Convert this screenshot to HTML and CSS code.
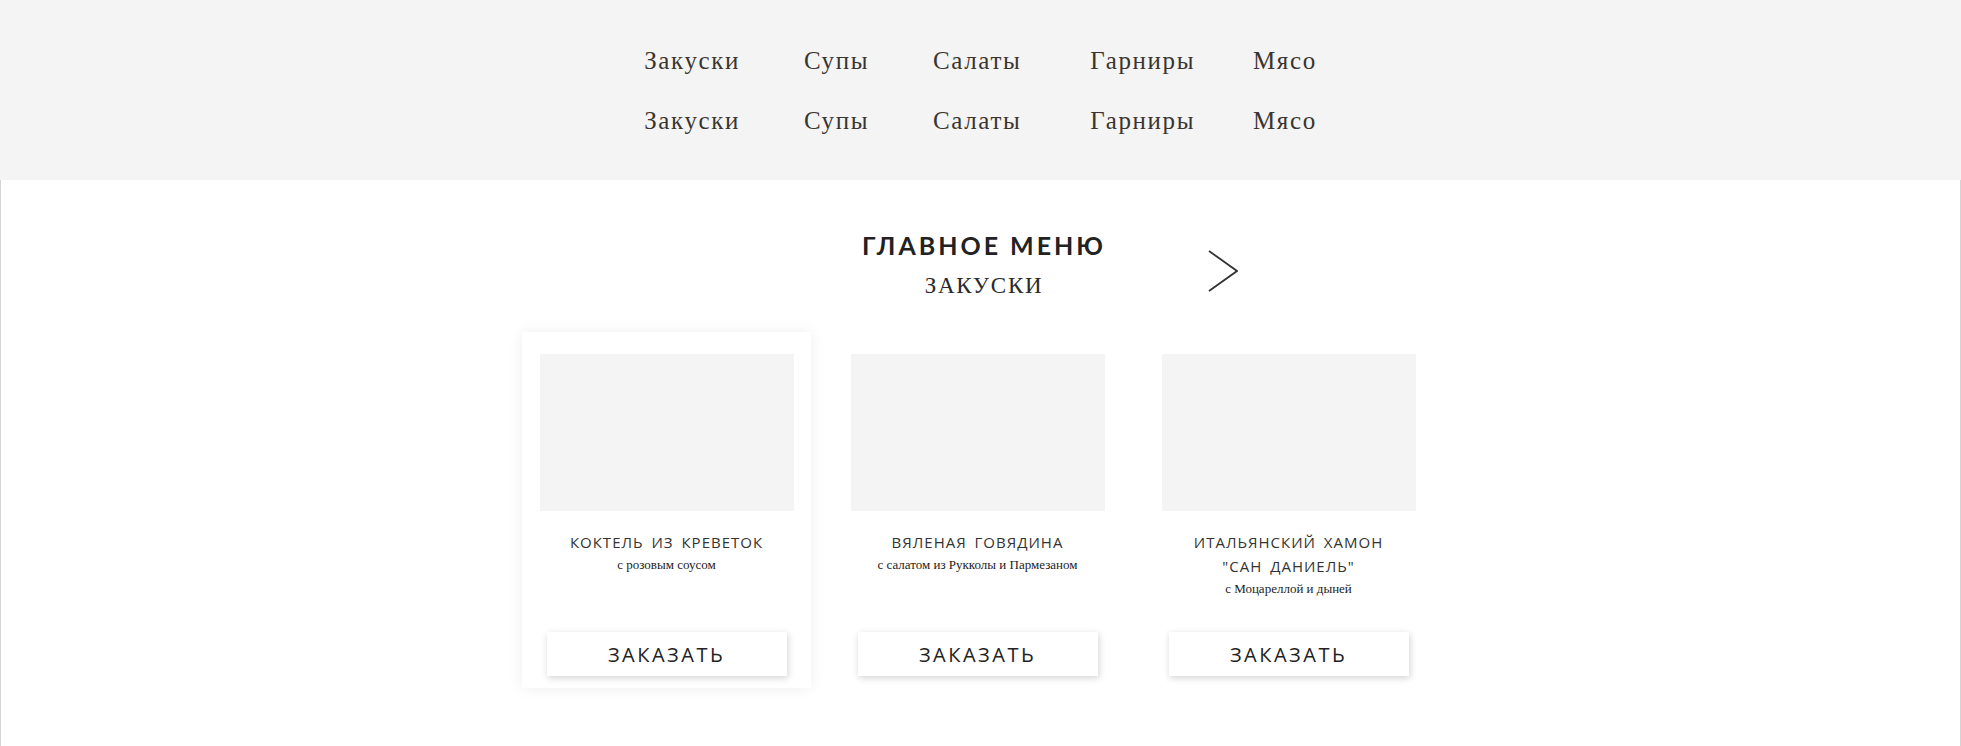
FILE: index.html
```html
<!DOCTYPE html>
<html lang="ru">
<head>
<meta charset="utf-8">
<title>Меню</title>
<link rel="stylesheet" href="styles.css">
</head>
<body>
<header class="top">
  <nav class="nav-row">
    <a class="nav-link" href="#">Закуски</a>
    <a class="nav-link" href="#">Супы</a>
    <a class="nav-link" href="#">Салаты</a>
    <a class="nav-link nav-wide" href="#">Гарниры</a>
    <a class="nav-link" href="#">Мясо</a>
  </nav>
  <nav class="nav-row">
    <a class="nav-link" href="#">Закуски</a>
    <a class="nav-link" href="#">Супы</a>
    <a class="nav-link" href="#">Салаты</a>
    <a class="nav-link nav-wide" href="#">Гарниры</a>
    <a class="nav-link" href="#">Мясо</a>
  </nav>
</header>
<main class="main">
  <section class="heading">
    <div class="heading-text">
      <h1 class="heading-title">ГЛАВНОЕ МЕНЮ</h1>
      <h2 class="heading-sub">ЗАКУСКИ</h2>
    </div>
    <a class="next" href="#" aria-label="Далее">
      <svg width="30" height="42" viewBox="0 0 30 42"><polyline points="1,1 29,21 1,41" fill="none" stroke="#333" stroke-width="1.8"/></svg>
    </a>
  </section>
  <section class="cards">
    <article class="card card-active">
      <div class="card-img"></div>
      <div class="card-info">
        <div class="card-title">КОКТЕЛЬ ИЗ КРЕВЕТОК</div>
        <div class="card-desc">с розовым соусом</div>
      </div>
      <button class="order">ЗАКАЗАТЬ</button>
    </article>
    <article class="card">
      <div class="card-img"></div>
      <div class="card-info">
        <div class="card-title">ВЯЛЕНАЯ ГОВЯДИНА</div>
        <div class="card-desc">с салатом из Рукколы и Пармезаном</div>
      </div>
      <button class="order">ЗАКАЗАТЬ</button>
    </article>
    <article class="card">
      <div class="card-img"></div>
      <div class="card-info">
        <div class="card-title">ИТАЛЬЯНСКИЙ ХАМОН<br>"САН ДАНИЕЛЬ"</div>
        <div class="card-desc">с Моцареллой и дыней</div>
      </div>
      <button class="order">ЗАКАЗАТЬ</button>
    </article>
  </section>
</main>
</body>
</html>
```

FILE: styles.css
```css
html, body {
  margin: 0;
  padding: 0;
  background: #ffffff;
}

body {
  font-family: "Liberation Serif", serif;
  color: #333;
}

.top {
  background: #f4f4f4;
  height: 180px;
  box-sizing: border-box;
  padding-top: 46px;
  display: flex;
  flex-direction: column;
  align-items: center;
  gap: 30px;
}

.nav-row {
  display: flex;
  gap: 64px;
}

.nav-link {
  font-family: "Liberation Serif", serif;
  font-size: 25px;
  line-height: 30px;
  letter-spacing: 1.6px;
  color: #3a3530;
  text-decoration: none;
}

.nav-wide {
  margin-left: 5px;
  margin-right: -6px;
}

.main {
  min-height: calc(100vh - 180px);
  box-sizing: border-box;
  border-left: 1px solid #d4d4d4;
  border-right: 1px solid #d4d4d4;
  padding-top: 50px;
}

.heading {
  display: grid;
  grid-template-columns: 1fr 456px 1fr;
}

.heading-text {
  grid-column: 2;
  text-align: center;
  padding-left: 7px;
}

.heading-title {
  margin: 0;
  font-family: "Lato", sans-serif;
  font-weight: 700;
  font-size: 25px;
  line-height: 30px;
  letter-spacing: 3px;
  color: #222;
}

.heading-sub {
  margin: 12px 0 0;
  font-family: "Liberation Serif", serif;
  font-weight: 400;
  font-size: 23px;
  line-height: 28px;
  letter-spacing: 1.7px;
  color: #2a2a2a;
}

.next {
  grid-column: 3;
  justify-self: start;
  align-self: start;
  margin-top: 20px;
  margin-left: -1px;
  display: block;
}

.next svg {
  display: block;
}

.cards {
  margin-top: 32px;
  padding-right: 6px;
  display: flex;
  justify-content: center;
  gap: 22px;
}

.card {
  width: 289px;
  height: 356px;
  box-sizing: border-box;
  padding: 22px 0 12px;
  display: flex;
  flex-direction: column;
  align-items: center;
}

.card-active {
  background: #fff;
  box-shadow: 0 0 14px rgba(0, 0, 0, 0.07);
}

.card-img {
  width: 254px;
  height: 157px;
  background: #f4f4f4;
  flex: none;
}

.card-info {
  margin-top: 19px;
  text-align: center;
}

.card-title {
  font-family: "Open Sans", sans-serif;
  font-size: 15px;
  line-height: 24px;
  letter-spacing: 1px;
  word-spacing: 3px;
  color: #333;
}

.card-desc {
  margin-top: 2px;
  font-family: "Liberation Serif", serif;
  font-size: 13px;
  line-height: 17px;
  color: #222;
}

.order {
  margin-top: auto;
  width: 240px;
  height: 44px;
  border: none;
  background: #fff;
  box-shadow: 1px 2px 7px rgba(0, 0, 0, 0.18);
  font-family: "Open Sans", sans-serif;
  font-size: 20px;
  letter-spacing: 2.5px;
  color: #222;
  cursor: pointer;
  padding: 0;
}
```
